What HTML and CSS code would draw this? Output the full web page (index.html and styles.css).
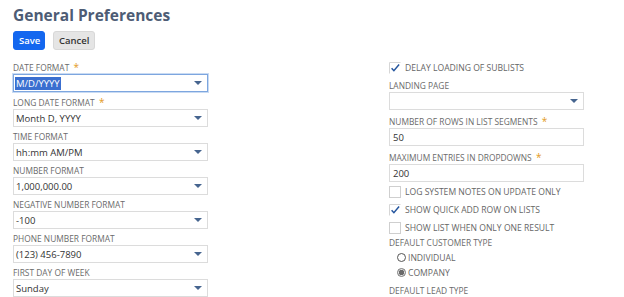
FILE: index.html
```html
<!DOCTYPE html>
<html lang="en">
<head>
  <meta charset="UTF-8">
  <title>General Preferences</title>
  <link rel="stylesheet" href="styles.css">
</head>
<body>
  <div class="page">
    <h1>General Preferences</h1>
    <div class="actions">
      <button class="btn btn-primary">Save</button>
      <button class="btn btn-secondary">Cancel</button>
    </div>

    <div class="form-grid">
      <!-- ===== Left column ===== -->
      <div class="column">
        <div class="field">
          <label>Date Format <span class="req">*</span></label>
          <div class="select focused"><span class="value selected">M/D/YYYY</span><span class="arrow"></span></div>
        </div>
        <div class="field">
          <label>Long Date Format <span class="req">*</span></label>
          <div class="select"><span class="value">Month D, YYYY</span><span class="arrow"></span></div>
        </div>
        <div class="field">
          <label>Time Format</label>
          <div class="select"><span class="value">hh:mm AM/PM</span><span class="arrow"></span></div>
        </div>
        <div class="field">
          <label>Number Format</label>
          <div class="select"><span class="value">1,000,000.00</span><span class="arrow"></span></div>
        </div>
        <div class="field">
          <label>Negative Number Format</label>
          <div class="select"><span class="value">-100</span><span class="arrow"></span></div>
        </div>
        <div class="field">
          <label>Phone Number Format</label>
          <div class="select"><span class="value">(123) 456-7890</span><span class="arrow"></span></div>
        </div>
        <div class="field">
          <label>First Day of Week</label>
          <div class="select"><span class="value">Sunday</span><span class="arrow"></span></div>
        </div>
      </div>

      <!-- ===== Right column ===== -->
      <div class="column right">
        <div class="check-row first">
          <svg class="checkbox" width="12" height="12" viewBox="0 0 12 12">
            <path d="M0.5 11.5V0.5H11.5" fill="none" stroke="#d6d6d6"/>
            <path d="M2.6 6.3l2.3 2.4 5.2-6.2" fill="none" stroke="#24559e" stroke-width="1.5"/>
          </svg>
          <span>Delay Loading of Sublists</span>
        </div>
        <div class="field">
          <label>Landing Page</label>
          <div class="select"><span class="value"></span><span class="arrow"></span></div>
        </div>
        <div class="field">
          <label>Number of Rows in List Segments <span class="req">*</span></label>
          <div class="textbox">50</div>
        </div>
        <div class="field last">
          <label>Maximum Entries in Dropdowns <span class="req">*</span></label>
          <div class="textbox">200</div>
        </div>
        <div class="check-row">
          <svg class="checkbox" width="12" height="12" viewBox="0 0 12 12">
            <rect x="0.5" y="0.5" width="11" height="11" fill="#fff" stroke="#cfcfcf"/>
          </svg>
          <span>Log System Notes on Update Only</span>
        </div>
        <div class="check-row">
          <svg class="checkbox" width="12" height="12" viewBox="0 0 12 12">
            <path d="M0.5 11.5V0.5H11.5" fill="none" stroke="#d6d6d6"/>
            <path d="M2.6 6.3l2.3 2.4 5.2-6.2" fill="none" stroke="#24559e" stroke-width="1.5"/>
          </svg>
          <span>Show Quick Add Row on Lists</span>
        </div>
        <div class="check-row">
          <svg class="checkbox" width="12" height="12" viewBox="0 0 12 12">
            <rect x="0.5" y="0.5" width="11" height="11" fill="#fff" stroke="#cfcfcf"/>
          </svg>
          <span>Show List When Only One Result</span>
        </div>
        <div class="group">
          <label>Default Customer Type</label>
          <div class="radio-row">
            <span class="radio"></span>
            <span>Individual</span>
          </div>
          <div class="radio-row">
            <span class="radio checked"></span>
            <span>Company</span>
          </div>
        </div>
        <div class="group">
          <label>Default Lead Type</label>
        </div>
      </div>
    </div>
  </div>
</body>
</html>
```

FILE: styles.css
```css
body {
  margin: 0;
  font-family: 'Open Sans', 'Liberation Sans', sans-serif;
  background-color: #fff;
  color: #333;
}
.page {
  padding: 5px 13px 0;
}
h1 {
  margin: 0;
  font-size: 15.5px;
  line-height: 20px;
  font-weight: 700;
  color: #4d5c75;
}
.actions {
  display: flex;
  gap: 8px;
  margin-top: 6px;
}
.btn {
  font-family: inherit;
  font-size: 9.5px;
  font-weight: 600;
  height: 19px;
  padding: 0 5px;
  border-radius: 3px;
  cursor: pointer;
}
.btn-primary {
  width: 32px;
  background-color: #1467ef;
  border: 1px solid #1467ef;
  color: #fff;
}
.btn-secondary {
  width: 42px;
  background-color: #e5e5e5;
  border: 1px solid #d8d8d8;
  color: #333;
}
.form-grid {
  display: grid;
  grid-template-columns: 195px 195px;
  column-gap: 181px;
  margin-top: 11px;
}
.field {
  margin-bottom: 4px;
}
.right .field {
  margin-bottom: 5px;
}
label {
  display: block;
  font-size: 8.4px;
  line-height: 12px;
  text-transform: uppercase;
  color: #6b6b6b;
}
.req {
  color: #e39a22;
  font-size: 10px;
  margin-left: 2px;
}
.select,
.textbox {
  box-sizing: border-box;
  height: 18px;
  border: 1px solid #dcdcdc;
  background-color: #fff;
  display: flex;
  align-items: center;
  padding: 0 5px 0 2px;
  font-size: 9.5px;
  color: #333;
}
.select .value {
  flex-grow: 1;
  line-height: 13px;
}
.select.focused {
  border-color: #7da6df;
  box-shadow: 0 0 0 1px #c9dbf3;
  padding-left: 1px;
}
.value.selected {
  flex-grow: 0;
  background-color: #3a6fd0;
  color: #fff;
  padding: 0 1px;
  margin-right: auto;
}
.arrow {
  width: 0;
  height: 0;
  border-left: 4px solid transparent;
  border-right: 4px solid transparent;
  border-top: 4px solid #46658f;
}
.textbox {
  padding-left: 3px;
}
.right .field.last {
  margin-bottom: 1px;
}
.check-row {
  display: flex;
  align-items: center;
  gap: 4px;
  height: 18px;
  font-size: 8.6px;
  text-transform: uppercase;
  color: #666;
}
.check-row.first {
  height: 13px;
  margin-bottom: 6px;
}
.checkbox {
  flex-shrink: 0;
}
.group label {
  margin-bottom: 1px;
}
.radio-row {
  display: flex;
  align-items: center;
  gap: 2px;
  height: 15px;
  padding-left: 8px;
  font-size: 8.6px;
  text-transform: uppercase;
  color: #666;
}
.radio {
  box-sizing: border-box;
  width: 9px;
  height: 9px;
  border: 1px solid #555;
  border-radius: 50%;
  background-color: #fff;
}
.radio.checked {
  border-color: #777;
  background: radial-gradient(circle, #6a6a6a 0, #6a6a6a 2.5px, #e8e8e8 3px);
}
.group {
  margin-bottom: 5px;
}
```
